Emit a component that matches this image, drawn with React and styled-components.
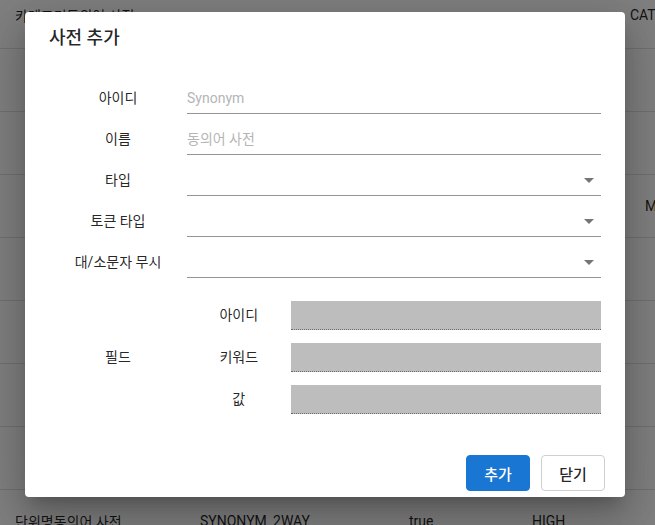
import React from 'react';
import styled, { createGlobalStyle } from 'styled-components';

const Global = createGlobalStyle`
  html, body { margin: 0; padding: 0; overflow: hidden; background: #fff; }
  body { font-family: Roboto, "Noto Sans CJK KR", sans-serif; }
  * { box-sizing: border-box; }
`;

const Page = styled.div`
  position: relative;
  width: 655px;
  height: 525px;
  overflow: hidden;
`;

const Table = styled.div`
  margin-top: -14px;
`;

const Row = styled.div`
  display: grid;
  grid-template-columns: 185px 209px 123px 98px 1fr;
  padding-left: 15px;
  height: 63px;
  align-items: center;
  border-bottom: 1px solid rgb(224, 224, 224);
  font-size: 14px;
  color: rgba(0, 0, 0, 0.87);
  white-space: nowrap;
`;

const Cell = styled.div`
  padding-left: ${(p) => (p.$indent ? '15px' : '0')};
  margin-top: ${(p) => (p.$raise ? '-4px' : '0')};
`;

const Backdrop = styled.div`
  position: absolute;
  inset: 0;
  background: rgba(0, 0, 0, 0.5);
`;

const Dialog = styled.div`
  position: absolute;
  top: 12px;
  left: 25px;
  width: 600px;
  background: #fff;
  border-radius: 4px;
  box-shadow: 0 11px 15px -7px rgba(0,0,0,0.2), 0 24px 38px 3px rgba(0,0,0,0.14), 0 9px 46px 8px rgba(0,0,0,0.12);
  color: rgba(0, 0, 0, 0.87);
`;

const Title = styled.h2`
  margin: 0;
  padding: 12px 24px 0;
  font-size: 18px;
  line-height: 27px;
  font-weight: 500;
`;

const Form = styled.div`
  display: flex;
  flex-direction: column;
  gap: 10px;
  padding: 0 24px;
  margin-top: 32px;
`;

const FieldRow = styled.div`
  display: grid;
  grid-template-columns: 25% 75%;
  align-items: center;
`;

const Label = styled.div`
  text-align: center;
  font-size: 14px;
  line-height: 17px;
`;

const Input = styled.input`
  display: block;
  width: 100%;
  height: 31px;
  border: none;
  border-bottom: 1px solid #949494;
  padding: 6px 0 7px;
  font-family: Roboto, "Noto Sans CJK KR", sans-serif;
  font-size: 14px;
  line-height: 17px;
  color: rgba(0, 0, 0, 0.87);
  background: transparent;
  outline: none;
  &::placeholder { color: #b5b5b5; opacity: 1; }
`;

const Select = styled.div`
  display: flex;
  align-items: center;
  height: 31px;
  border-bottom: 1px solid #949494;
`;

const SelectValue = styled.div`
  flex: 1;
  font-size: 14px;
`;

const ArrowIcon = styled.svg`
  width: 24px;
  height: 24px;
  fill: #757575;
  flex: none;
`;

const FieldSection = styled.div`
  display: grid;
  grid-template-columns: 25% 75%;
  align-items: center;
  margin-top: 13px;
`;

const SubList = styled.div`
  display: flex;
  flex-direction: column;
  gap: 13px;
`;

const SubRow = styled.div`
  display: grid;
  grid-template-columns: 25% 75%;
  align-items: center;
`;

const GrayBox = styled.div`
  height: 29px;
  background: #bdbdbd;
  border-bottom: 1px dotted #6a6a6a;
`;

const Actions = styled.div`
  display: flex;
  justify-content: flex-end;
  gap: 11px;
  padding: 41px 20px 6px 0;
`;

const Button = styled.button`
  width: 64px;
  height: 36px;
  border-radius: 4px;
  font-family: Roboto, "Noto Sans CJK KR", sans-serif;
  font-size: 15px;
  font-weight: 500;
  cursor: pointer;
  border: 1px solid ${(p) => (p.$primary ? '#1976d2' : '#cfcfcf')};
  background: ${(p) => (p.$primary ? '#1976d2' : '#fff')};
  color: ${(p) => (p.$primary ? '#fff' : 'rgba(0,0,0,0.87)')};
`;

const Arrow = () => (
  <ArrowIcon viewBox="0 0 24 24">
    <path d="M7 10l5 5 5-5z" />
  </ArrowIcon>
);

const rows = [
  ['카테고리동의어 사전', '', '', '', 'CAT', false],
  ['', '', '', '', '', false],
  ['', '', '', '', '', false],
  ['', '', '', '', 'M', true],
  ['', '', '', '', '', false],
  ['', '', '', '', '', false],
  ['', '', '', '', '', false],
  ['', '', '', '', '', false],
  ['단위명동의어 사전', 'SYNONYM_2WAY', 'true', 'HIGH', '', false],
];

export default function App() {
  return (
    <Page>
      <Global />
      <Table>
        {rows.map((r, i) => (
          <Row key={i}>
            <Cell $raise={i === 0}>{r[0]}</Cell>
            <Cell>{r[1]}</Cell>
            <Cell>{r[2]}</Cell>
            <Cell>{r[3]}</Cell>
            <Cell $indent={r[5]} $raise={i === 0}>{r[4]}</Cell>
          </Row>
        ))}
      </Table>
      <Backdrop />
      <Dialog>
        <Title>사전 추가</Title>
        <Form>
          <FieldRow>
            <Label>아이디</Label>
            <Input placeholder="Synonym" />
          </FieldRow>
          <FieldRow>
            <Label>이름</Label>
            <Input placeholder="동의어 사전" />
          </FieldRow>
          <FieldRow>
            <Label>타입</Label>
            <Select><SelectValue /><Arrow /></Select>
          </FieldRow>
          <FieldRow>
            <Label>토큰 타입</Label>
            <Select><SelectValue /><Arrow /></Select>
          </FieldRow>
          <FieldRow>
            <Label>대/소문자 무시</Label>
            <Select><SelectValue /><Arrow /></Select>
          </FieldRow>
          <FieldSection>
            <Label>필드</Label>
            <SubList>
              <SubRow><Label>아이디</Label><GrayBox /></SubRow>
              <SubRow><Label>키워드</Label><GrayBox /></SubRow>
              <SubRow><Label>값</Label><GrayBox /></SubRow>
            </SubList>
          </FieldSection>
        </Form>
        <Actions>
          <Button $primary>추가</Button>
          <Button>닫기</Button>
        </Actions>
      </Dialog>
    </Page>
  );
}
